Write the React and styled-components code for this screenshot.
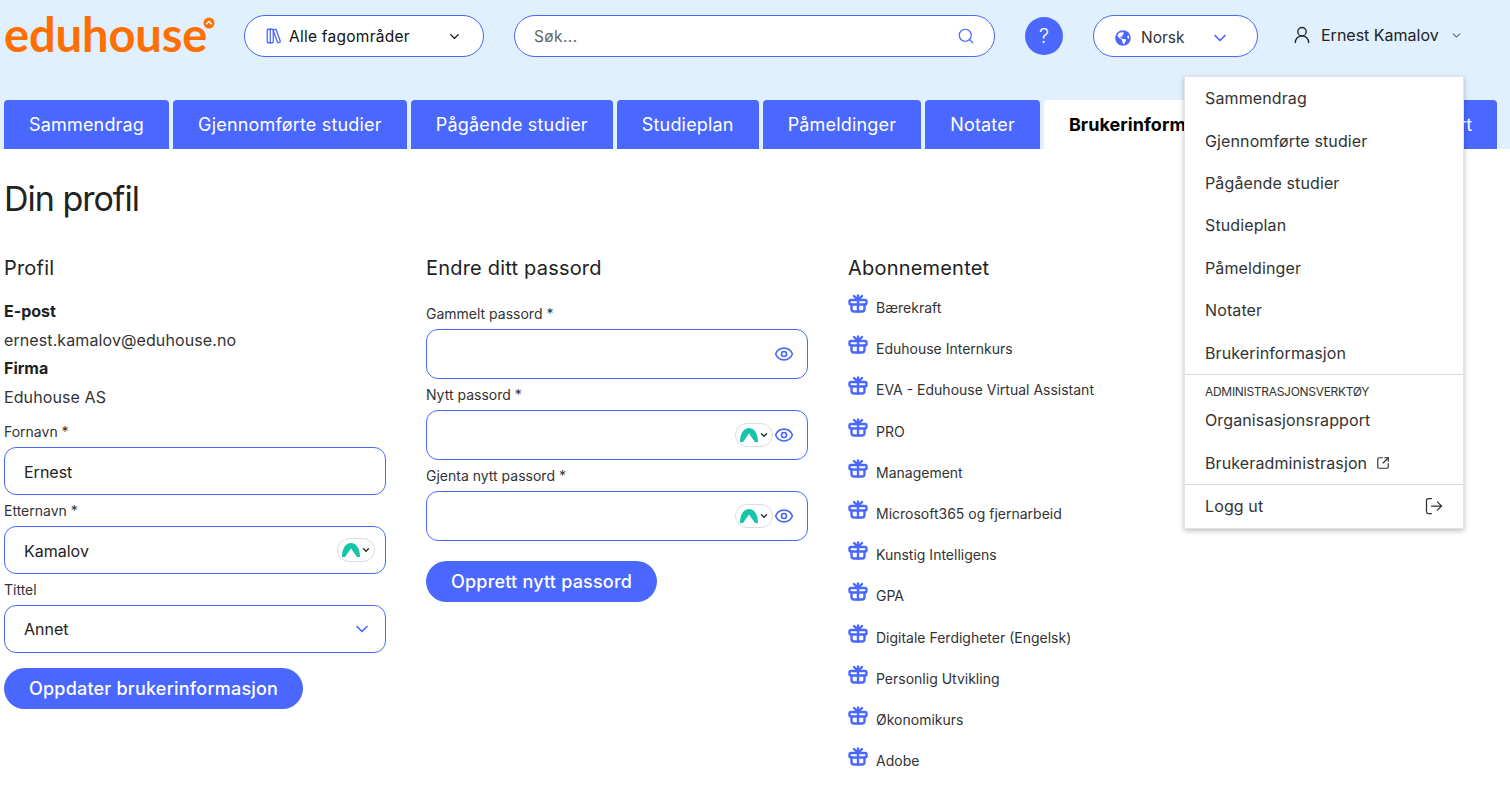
import React from "react";
import styled, { createGlobalStyle } from "styled-components";
import {
  ChevronDown,
  Eye,
  LibraryBig,
  LogOut,
  Search,
  SquareArrowOutUpRight,
  UserRound,
} from "lucide-react";
import { FaGlobeAmericas } from "react-icons/fa";

const tabs = [
  "Sammendrag",
  "Gjennomførte studier",
  "Pågående studier",
  "Studieplan",
  "Påmeldinger",
  "Notater",
  "Brukerinformasjon",
  "Organisasjonsrapport",
];

const menuItems = [
  "Sammendrag",
  "Gjennomførte studier",
  "Pågående studier",
  "Studieplan",
  "Påmeldinger",
  "Notater",
  "Brukerinformasjon",
];

const subscriptions = [
  "Bærekraft",
  "Eduhouse Internkurs",
  "EVA - Eduhouse Virtual Assistant",
  "PRO",
  "Management",
  "Microsoft365 og fjernarbeid",
  "Kunstig Intelligens",
  "GPA",
  "Digitale Ferdigheter (Engelsk)",
  "Personlig Utvikling",
  "Økonomikurs",
  "Adobe",
];

function GiftIcon() {
  return (
    <GiftSvg width="20" height="19" viewBox="0 0 20 19" fill="none" stroke="#4a67ff" strokeWidth="2.400" strokeLinecap="round" strokeLinejoin="round">
      <rect x="1.500" y="6" width="17" height="4.500" rx="1.500" />
      <path d="M3.500 10.500V15a2.500 2.500 0 0 0 2.500 2.500h8a2.500 2.500 0 0 0 2.500-2.500v-4.500" />
      <path d="M10 6v11.500" />
      <path d="M10 5.500V1.500M6 2l3.500 3.500M14 2l-3.500 3.500" />
    </GiftSvg>
  );
}

function PassBadge() {
  return (
    <Badge>
      <svg width="18" height="14" viewBox="0 0 18 14">
        <path d="M0 14C0 5 4 0 9 0S18 5 18 14H15L9 5.500 3 14z" fill="#16c5a9" />
      </svg>
      <ChevronDown size={10} strokeWidth={3.5} color="#333" />
    </Badge>
  );
}

function Field({ label, value, badge, eye, tall }) {
  return (
    <FieldWrap>
      <Label>{label}</Label>
      <InputBox $tall={tall} $tight={badge && !eye}>
        <ValueText>{value}</ValueText>
        <InputIcons>
          {badge && <PassBadge />}
          {eye && <Eye size={20} color="#4a67ff" strokeWidth={2} />}
        </InputIcons>
      </InputBox>
    </FieldWrap>
  );
}

export default function App() {
  return (
    <>
      <GlobalStyle />
      <Page>
        <TopArea>
          <Toolbar>
            <Logo>
              eduhouse
              <LogoMark width="12" height="12" viewBox="0 0 12 12">
                <circle cx="6" cy="6" r="5.500" fill="#ff6f00" />
                <path d="M3.300 7.300 6 4.300l2.700 3" fill="none" stroke="#fff" strokeWidth="1.500" />
              </LogoMark>
            </Logo>
            <CategoryPill>
              <LibraryBig size={18} color="#4a67ff" strokeWidth={1.7} />
              <CategoryText>Alle fagområder</CategoryText>
              <ChevronDown size={15} color="#111" strokeWidth={2.2} />
            </CategoryPill>
            <SearchPill>
              <SearchText>Søk...</SearchText>
              <Search size={18} color="#4a67ff" strokeWidth={1.6} />
            </SearchPill>
            <HelpButton>?</HelpButton>
            <LangPill>
              <FaGlobeAmericas size={16} color="#4a67ff" />
              <LangText>Norsk</LangText>
              <ChevronDown size={20} color="#4a67ff" strokeWidth={2} />
            </LangPill>
            <UserBox>
              <UserRound size={20} color="#222" strokeWidth={1.6} />
              <UserName>Ernest Kamalov</UserName>
              <ChevronDown size={13} color="#222" strokeWidth={1.8} />
            </UserBox>
          </Toolbar>
          <TabRow>
            {tabs.map((t) => (
              <Tab key={t} $active={t === "Brukerinformasjon"}>
                {t}
              </Tab>
            ))}
          </TabRow>
        </TopArea>

        <Main>
          <PageTitle>Din profil</PageTitle>
          <Columns>
            <Column>
              <SectionTitle>Profil</SectionTitle>
              <InfoList>
                <InfoLabel>E-post</InfoLabel>
                <InfoValue>ernest.kamalov@eduhouse.no</InfoValue>
                <InfoLabel>Firma</InfoLabel>
                <InfoValue>Eduhouse AS</InfoValue>
              </InfoList>
              <FieldStack>
                <Field label="Fornavn *" value="Ernest" />
                <Field label="Etternavn *" value="Kamalov" badge />
                <FieldWrap>
                  <Label>Tittel</Label>
                  <InputBox>
                    <span>Annet</span>
                    <ChevronDown size={20} color="#4a67ff" strokeWidth={2} />
                  </InputBox>
                </FieldWrap>
              </FieldStack>
              <PrimaryButton>Oppdater brukerinformasjon</PrimaryButton>
            </Column>

            <Column>
              <SectionTitle>Endre ditt passord</SectionTitle>
              <PasswordStack>
                <Field label="Gammelt passord *" eye tall />
                <Field label="Nytt passord *" badge eye tall />
                <Field label="Gjenta nytt passord *" badge eye tall />
              </PasswordStack>
              <PasswordButton>Opprett nytt passord</PasswordButton>
            </Column>

            <Column>
              <SectionTitle>Abonnementet</SectionTitle>
              <SubList>
                {subscriptions.map((s) => (
                  <SubRow key={s}>
                    <GiftIcon />
                    <span>{s}</span>
                  </SubRow>
                ))}
              </SubList>
            </Column>
          </Columns>
        </Main>

        <Menu>
          {menuItems.map((m) => (
            <MenuItem key={m}>{m}</MenuItem>
          ))}
          <MenuDivider />
          <MenuHeading>ADMINISTRASJONSVERKTØY</MenuHeading>
          <MenuItem>Organisasjonsrapport</MenuItem>
          <AdminItem>
            Brukeradministrasjon
            <SquareArrowOutUpRight size={14} color="#333" strokeWidth={2} />
          </AdminItem>
          <MenuDivider />
          <LogoutItem>
            Logg ut
            <LogOut size={20} color="#333" strokeWidth={1.5} />
          </LogoutItem>
        </Menu>
      </Page>
    </>
  );
}

const GlobalStyle = createGlobalStyle`
  * { box-sizing: border-box; }
  html, body { margin: 0; padding: 0; background: #fff; }
  body {
    font-family: Inter, "Open Sans", sans-serif;
    color: #222;
  }
`;

const Page = styled.div`
  position: relative;
  width: 1510px;
  height: 805px;
  overflow: hidden;
`;

const TopArea = styled.header`
  height: 149px;
  padding: 15px 0 0 4px;
  background: #e0f0ff;
  display: flex;
  flex-direction: column;
  justify-content: space-between;
`;

const Toolbar = styled.div`
  display: flex;
  align-items: flex-start;
`;

const Logo = styled.div`
  position: relative;
  width: 240px;
  margin-top: -6px;
  font-family: "Lato", sans-serif;
  font-size: 47px;
  line-height: 50px;
  font-weight: 700;
  color: #ff6f00;
  letter-spacing: -0.1px;
`;

const LogoMark = styled.svg`
  position: absolute;
  left: 199px;
  top: 8px;
`;

const Pill = styled.div`
  height: 42px;
  display: flex;
  align-items: center;
  background: #fff;
  border: 1px solid #4a67ff;
  border-radius: 21px;
`;

const CategoryPill = styled(Pill)`
  width: 240px;
  padding: 0 21px 0 20px;
`;

const CategoryText = styled.span`
  flex: 1;
  margin-left: 6px;
  font-size: 15.500px;
  letter-spacing: 0.25px;
  color: #111;
`;

const SearchPill = styled(Pill)`
  width: 481px;
  margin-left: 30px;
  padding: 0 19px 0 19px;
  justify-content: space-between;
`;

const SearchText = styled.span`
  font-size: 15.500px;
  letter-spacing: 0.4px;
  color: #666;
`;

const HelpButton = styled.div`
  width: 38px;
  height: 38px;
  margin: 2px 0 0 30px;
  border-radius: 50%;
  background: #4a67ff;
  color: #fff;
  font-size: 20px;
  font-weight: 300;
  display: flex;
  align-items: center;
  justify-content: center;
`;

const LangPill = styled(Pill)`
  width: 165px;
  margin-left: 30px;
  padding: 3px 27px 0 21px;
`;

const LangText = styled.span`
  flex: 1;
  margin-left: 10px;
  font-size: 15.500px;
  color: #333;
`;

const UserBox = styled.div`
  display: flex;
  align-items: center;
  height: 40px;
  margin-left: 34px;
`;

const UserName = styled.span`
  margin: 0 11px 0 9px;
  font-size: 16px;
  color: #222;
`;

const TabRow = styled.nav`
  display: flex;
  gap: 4px;
`;

const Tab = styled.div`
  height: 49px;
  padding: 0 25px;
  display: flex;
  align-items: center;
  border-radius: 4px 4px 0 0;
  font-size: 18px;
  letter-spacing: 0.18px;
  white-space: nowrap;
  font-weight: ${(p) => (p.$active ? 700 : 400)};
  background: ${(p) => (p.$active ? "#fff" : "#4a67ff")};
  color: ${(p) => (p.$active ? "#000" : "#fff")};
  &:nth-child(n + 7) {
    letter-spacing: 0.05px;
  }
`;

const Main = styled.main`
  padding: 29px 0 0 4px;
`;

const PageTitle = styled.h1`
  margin: 0 0 36px;
  font-size: 34px;
  line-height: 42px;
  font-weight: 400;
  letter-spacing: -1px;
  color: #222;
`;

const Columns = styled.div`
  display: flex;
  gap: 40px;
`;

const Column = styled.section`
  width: 382px;
`;

const SectionTitle = styled.h2`
  margin: 0;
  font-size: 20px;
  line-height: 24px;
  font-weight: 400;
  letter-spacing: 0.2px;
  color: #222;
`;

const InfoList = styled.div`
  margin-top: 17px;
  display: flex;
  flex-direction: column;
  font-size: 16px;
  line-height: 28.500px;
`;

const InfoLabel = styled.div`
  font-weight: 700;
  color: #222;
`;

const InfoValue = styled.div`
  letter-spacing: 0.1px;
  color: #333;
`;

const FieldStack = styled.div`
  margin-top: 10px;
  display: flex;
  flex-direction: column;
  gap: 5px;
`;

const PasswordStack = styled(FieldStack)`
  margin-top: 23px;
`;

const FieldWrap = styled.div`
  display: flex;
  flex-direction: column;
`;

const Label = styled.div`
  height: 26px;
  padding-top: 1px;
  font-size: 14px;
  line-height: 20px;
  color: #333;
`;

const InputBox = styled.div`
  height: ${(p) => (p.$tall ? "50px" : "48px")};
  padding: 0 ${(p) => (p.$tight ? "10px" : "13px")} 0 19px;
  display: flex;
  align-items: center;
  justify-content: space-between;
  background: #fff;
  border: 1px solid #4a67ff;
  border-radius: 12px;
  font-size: 16px;
  color: #222;
`;

const ValueText = styled.span`
  padding-top: 2px;
`;

const InputIcons = styled.div`
  display: flex;
  align-items: center;
  gap: 1px;
`;

const Badge = styled.div`
  width: 38px;
  height: 24px;
  padding-left: 4px;
  display: flex;
  align-items: center;
  gap: 1px;
  border: 1px solid #ddd;
  border-radius: 12px;
  background: #fff;
`;

const PrimaryButton = styled.button`
  display: block;
  height: 41px;
  margin-top: 15px;
  padding: 0 25px;
  border: none;
  border-radius: 21px;
  background: #4a67ff;
  color: #fff;
  font-family: inherit;
  font-size: 18px;
  font-weight: 500;
  letter-spacing: 0.2px;
`;

const PasswordButton = styled(PrimaryButton)`
  margin-top: 20px;
`;

const SubList = styled.ul`
  margin: 13px 0 0;
  padding: 0;
  list-style: none;
`;

const SubRow = styled.li`
  height: 41.200px;
  display: flex;
  align-items: flex-start;
  gap: 8px;
  font-size: 14px;
  line-height: 22px;
  color: #333;
  & > span {
    padding-top: 5px;
    line-height: 20px;
  }
`;

const GiftSvg = styled.svg`
  margin-top: 1px;
`;

const Menu = styled.div`
  position: absolute;
  left: 1184px;
  top: 76px;
  width: 280px;
  height: 453px;
  background: #fff;
  border: 1px solid #e4e4e4;
  box-shadow: 0 2px 5px rgba(0, 0, 0, 0.25);
`;

const MenuItem = styled.div`
  height: 42.400px;
  padding: 0 19px 0 20px;
  display: flex;
  align-items: center;
  gap: 11px;
  font-size: 16px;
  letter-spacing: 0.12px;
  color: #333;
`;

const AdminItem = styled(MenuItem)`
  gap: 9px;
  padding-top: 2px;
`;

const LogoutItem = styled(MenuItem)`
  justify-content: space-between;
`;

const MenuDivider = styled.div`
  height: 1px;
  background: #d8d8d8;
`;

const MenuHeading = styled.div`
  padding: 10px 20px 0;
  font-size: 12px;
  line-height: 14px;
  letter-spacing: -0.3px;
  color: #333;
`;
